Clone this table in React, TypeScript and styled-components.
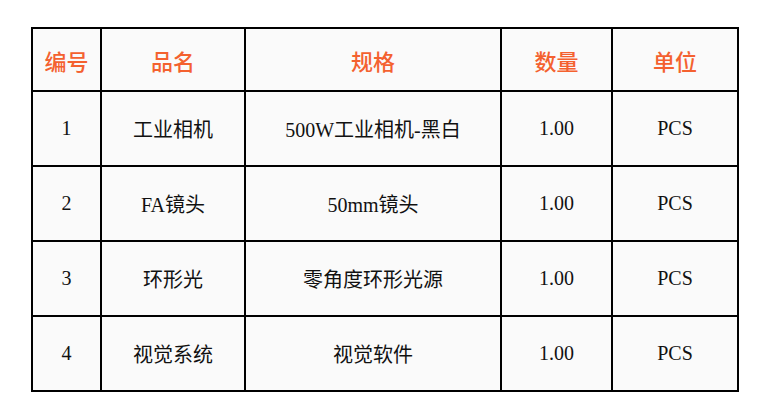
import styled, { createGlobalStyle } from 'styled-components';

const GlobalStyle = createGlobalStyle`
  html, body {
    margin: 0;
    padding: 0;
    background: #ffffff;
  }
  body {
    font-family: "Liberation Serif", "Noto Sans CJK SC", serif;
    color: #111;
  }
`;

const Page = styled.div`
  padding: 27px 0 0 31px;
`;

const Table = styled.table`
  border-collapse: collapse;
  table-layout: fixed;
  background: #fafafa;
`;

const HeadCell = styled.th<{ $w: number }>`
  width: ${({ $w }) => $w}px;
  height: 61px;
  padding: 0;
  border: 2px solid #000;
  color: #f4612f;
  font-size: 22px;
  font-weight: 500;
  text-align: center;
  vertical-align: middle;
`;

const Cell = styled.td`
  height: 73px;
  padding: 0;
  border: 2px solid #000;
  font-size: 20px;
  text-align: center;
  vertical-align: middle;
`;

const columns = [
  { label: '编号', w: 67 },
  { label: '品名', w: 142 },
  { label: '规格', w: 254 },
  { label: '数量', w: 109 },
  { label: '单位', w: 124 },
];

const rows = [
  ['1', '工业相机', '500W工业相机-黑白', '1.00', 'PCS'],
  ['2', 'FA镜头', '50mm镜头', '1.00', 'PCS'],
  ['3', '环形光', '零角度环形光源', '1.00', 'PCS'],
  ['4', '视觉系统', '视觉软件', '1.00', 'PCS'],
];

const App = () => (
  <Page>
    <GlobalStyle />
    <Table>
      <thead>
        <tr>
          {columns.map((c) => (
            <HeadCell key={c.label} $w={c.w}>
              {c.label}
            </HeadCell>
          ))}
        </tr>
      </thead>
      <tbody>
        {rows.map((r) => (
          <tr key={r[0]}>
            {r.map((v, i) => (
              <Cell key={i}>{v}</Cell>
            ))}
          </tr>
        ))}
      </tbody>
    </Table>
  </Page>
);

export default App;
